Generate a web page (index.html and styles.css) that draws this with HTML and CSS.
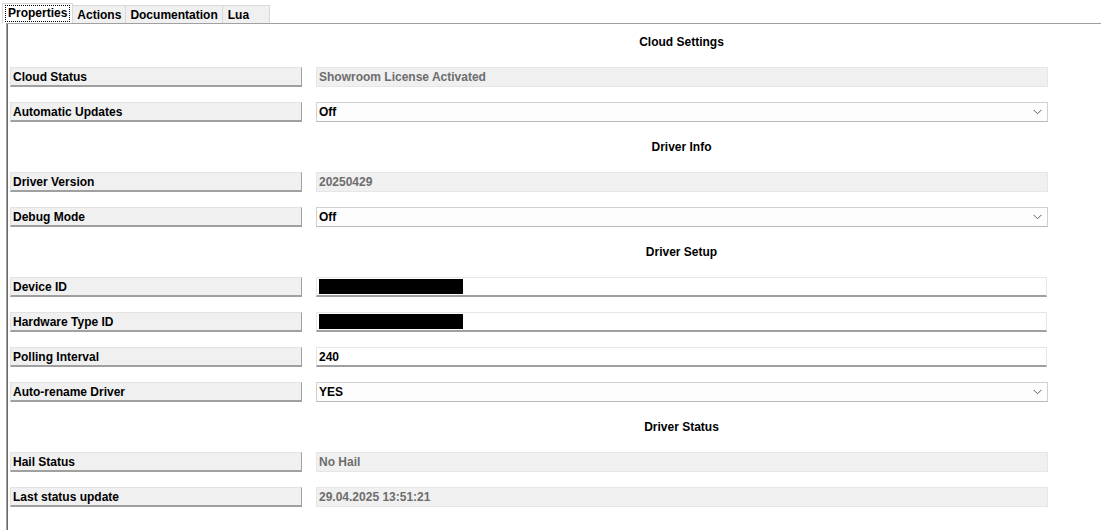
FILE: index.html
```html
<!DOCTYPE html>
<html>
<head>
<meta charset="utf-8">
<link rel="stylesheet" href="styles.css">
</head>
<body>
<div class="tabs">
  <div class="tab active"><span class="focus">Properties</span></div>
  <div class="tab">Actions</div>
  <div class="tab">Documentation</div>
  <div class="tab">Lua</div>
</div>
<div class="panel">
  <div class="grid">
    <div class="header">Cloud Settings</div>

    <div class="label">Cloud Status</div>
    <div class="value ro">Showroom License Activated</div>

    <div class="label">Automatic Updates</div>
    <div class="value sel">Off<svg class="chev" width="9" height="6" viewBox="0 0 9 6"><path d="M0.5 0.8 L4.5 4.8 L8.5 0.8" fill="none" stroke="#606060" stroke-width="1"/></svg></div>

    <div class="header">Driver Info</div>

    <div class="label">Driver Version</div>
    <div class="value ro">20250429</div>

    <div class="label">Debug Mode</div>
    <div class="value sel">Off<svg class="chev" width="9" height="6" viewBox="0 0 9 6"><path d="M0.5 0.8 L4.5 4.8 L8.5 0.8" fill="none" stroke="#606060" stroke-width="1"/></svg></div>

    <div class="header">Driver Setup</div>

    <div class="label">Device ID</div>
    <div class="value inp"><span class="redact r1"></span></div>

    <div class="label">Hardware Type ID</div>
    <div class="value inp"><span class="redact r2"></span></div>

    <div class="label">Polling Interval</div>
    <div class="value inp">240</div>

    <div class="label">Auto-rename Driver</div>
    <div class="value sel">YES<svg class="chev" width="9" height="6" viewBox="0 0 9 6"><path d="M0.5 0.8 L4.5 4.8 L8.5 0.8" fill="none" stroke="#606060" stroke-width="1"/></svg></div>

    <div class="header">Driver Status</div>

    <div class="label">Hail Status</div>
    <div class="value ro">No Hail</div>

    <div class="label">Last status update</div>
    <div class="value ro">29.04.2025 13:51:21</div>
  </div>
</div>
</body>
</html>
```
FILE: styles.css
```css
html, body {
  margin: 0;
  padding: 0;
  background: #ffffff;
  font-family: "Liberation Sans", Arial, sans-serif;
  font-size: 12px;
  font-weight: bold;
  color: #000000;
  overflow: hidden;
}

.tabs {
  display: flex;
  align-items: flex-end;
  height: 23px;
  padding-left: 2px;
  box-sizing: border-box;
}

.tab {
  height: 18px;
  box-sizing: border-box;
  padding: 2px 4px 0 4px;
  background: #f0f0f0;
  border: 1px solid #d9d9d9;
  border-bottom: none;
  margin-left: -1px;
  line-height: 15px;
  white-space: nowrap;
}

.tab:last-child {
  padding-left: 5px;
  padding-right: 20px;
}

.tab.active {
  height: 20px;
  background: #ffffff;
  padding: 2px 3px 0 3px;
  margin-left: 0;
  z-index: 1;
}

.tab .focus {
  display: block;
  outline: 1px dotted #000000;
  outline-offset: 0;
  padding: 0 2px;
  line-height: 15px;
}

.panel {
  margin-left: 6px;
  border-top: 1px solid #a0a0a0;
  border-left: 1px solid #a0a0a0;
  box-shadow: inset 1px 0 0 #696969;
  height: 507px;
  padding-left: 3px;
}

.grid {
  display: grid;
  grid-template-columns: 292px 732px;
  grid-auto-rows: 35px;
  column-gap: 14px;
  align-items: center;
}

.header {
  grid-column: 2;
  text-align: center;
  padding-top: 1px;
  padding-right: 1px;
}

.label {
  grid-column: 1;
  height: 20px;
  box-sizing: border-box;
  background: #f0f0f0;
  border: 1px solid #e3e3e3;
  border-right-color: #a0a0a0;
  border-bottom: 2px solid #a0a0a0;
  padding-left: 2px;
  line-height: 18px;
  white-space: nowrap;
}

.value {
  grid-column: 2;
  position: relative;
  height: 20px;
  box-sizing: border-box;
  padding-left: 2px;
  line-height: 19px;
  white-space: nowrap;
}

.value.ro {
  background: #f0f0f0;
  border: 1px solid #e6e6e6;
  color: #6d6d6d;
}

.value.sel {
  background: #fdfdfd;
  border: 1px solid #d0d0d0;
  border-bottom-color: #b8b8b8;
}

.value.inp {
  background: #ffffff;
  border: 1px solid #e6e6e6;
  border-bottom: 2px solid #a0a0a0;
  line-height: 18px;
  margin-right: 1px;
}

.chev {
  position: absolute;
  right: 5px;
  top: 6px;
}

.redact {
  display: inline-block;
  background: #000000;
  height: 15px;
  vertical-align: top;
  margin-top: 1px;
}

.redact.r1 {
  width: 144px;
}

.redact.r2 {
  width: 144px;
}
```
